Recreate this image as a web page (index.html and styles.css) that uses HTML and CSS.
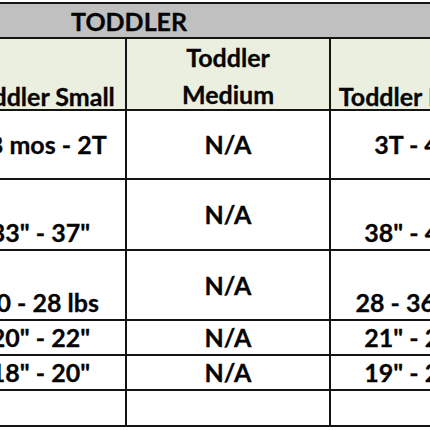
FILE: index.html
```html
<!DOCTYPE html>
<html>
<head>
<meta charset="utf-8">
<link rel="stylesheet" href="styles.css">
</head>
<body>
<div class="viewport">
  <div class="chart">
    <div class="title-row"><span class="title">TODDLER</span></div>
    <div class="row head">
      <div class="cell bot">Toddler Small</div>
      <div class="cell two"><span>Toddler</span><span>Medium</span></div>
      <div class="cell bot">Toddler Large</div>
    </div>
    <div class="row r1">
      <div class="cell mid">18 mos - 2T</div>
      <div class="cell mid">N/A</div>
      <div class="cell mid">3T - 4T</div>
    </div>
    <div class="row r2">
      <div class="cell bot">33" - 37"</div>
      <div class="cell mid">N/A</div>
      <div class="cell bot">38" - 41"</div>
    </div>
    <div class="row r3">
      <div class="cell bot">20 - 28 lbs</div>
      <div class="cell mid">N/A</div>
      <div class="cell bot">28 - 36 lbs</div>
    </div>
    <div class="row r4">
      <div class="cell mid">20" - 22"</div>
      <div class="cell mid">N/A</div>
      <div class="cell mid">21" - 23"</div>
    </div>
    <div class="row r5">
      <div class="cell mid">18" - 20"</div>
      <div class="cell mid">N/A</div>
      <div class="cell mid">19" - 21"</div>
    </div>
    <div class="row r6">
      <div class="cell mid"></div>
      <div class="cell mid"></div>
      <div class="cell mid"></div>
    </div>
  </div>
</div>
</body>
</html>
```
FILE: styles.css
```css
body {
  margin: 0;
  background: #ffffff;
}
.viewport {
  width: 430px;
  height: 430px;
  overflow: hidden;
}
.chart {
  margin-top: 2px;
  margin-left: -44px;
  width: 543px;
  border-top: 2px solid #141414;
  font-family: Lato, "Liberation Sans", sans-serif;
  font-weight: 700;
  font-size: 25px;
  color: #050505;
  -webkit-text-stroke: 0.3px #050505;
}
.title-row {
  background: #c0c0c0;
  border-bottom: 2px solid #141414;
  display: flex;
  align-items: center;
  padding-left: 115px;
  padding-top: 2px;
  height: 31px;
}
.title {
  line-height: 33px;
}
.row {
  display: grid;
  grid-template-columns: 171px 204px 168px;
  border-bottom: 2px solid #141414;
}
.cell {
  border-right: 2px solid #141414;
  display: flex;
  justify-content: center;
  line-height: 33px;
  white-space: nowrap;
}
.mid {
  align-items: center;
}
.bot {
  align-items: flex-end;
}
.two {
  flex-direction: column;
  justify-content: center;
  align-items: center;
  line-height: 37px;
  padding-bottom: 5px;
}
.head {
  height: 70px;
  background: #ebefdf;
}
.head .bot {
  line-height: 31px;
  padding-bottom: 6px;
}
.r1 { height: 67px; }
.r2 { height: 69px; }
.r3 { height: 68px; }
.r4 { height: 33px; }
.r5 { height: 33px; }
.r6 { height: 34px; }
```
